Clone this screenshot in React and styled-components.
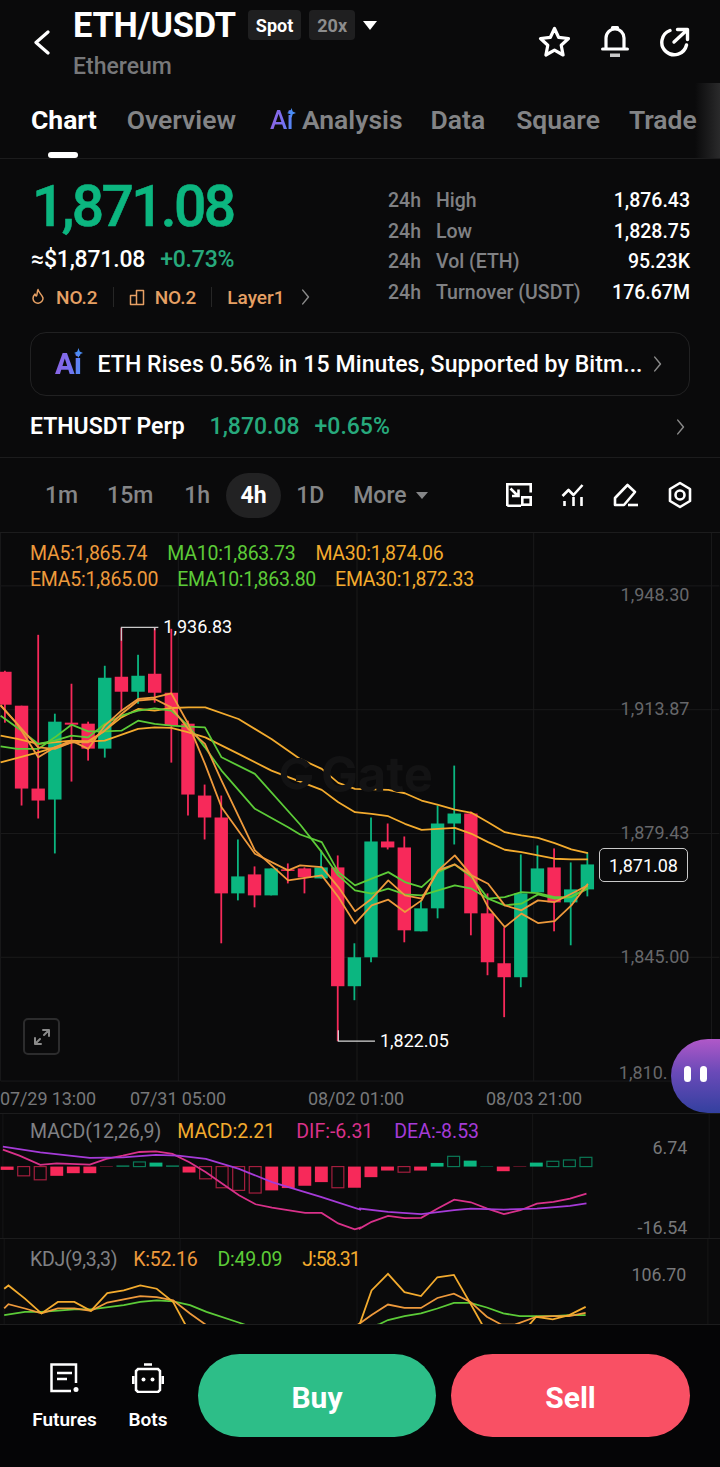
import React from 'react';
import styled, { createGlobalStyle } from 'styled-components';

const Global = createGlobalStyle`
  html, body { margin: 0; padding: 0; background: #0a0a0b; }
  body { font-family: Roboto, "Noto Sans", sans-serif; color: #fff; -webkit-font-smoothing: antialiased; }
  * { box-sizing: border-box; }
`;

const Page = styled.div`
  width: 720px; height: 1467px; position: relative; overflow: hidden; background: #0a0a0b;
  display: flex; flex-direction: column;
`;

/* ---------- header ---------- */
const Header = styled.header`
  height: 83px; display: grid; grid-template-columns: 73px 1fr auto; padding-left: 0; flex: none;
`;
const BackBtn = styled.div`
  display: flex; padding: 30px 0 0 33px;
`;
const TitleCol = styled.div`
  display: flex; flex-direction: column; padding-top: 6px;
`;
const TitleRow = styled.div` display: flex; align-items: center; height: 38px; `;
const Pair = styled.h1`
  margin: 0; font-size: 34.4px; line-height: 38px; font-weight: 700; letter-spacing: -0.2px; color: #fff;
`;
const Tag = styled.span`
  height: 30px; padding: 0 8px; display: inline-flex; align-items: center; justify-content: center;
  border-radius: 4px; background: #1f1f20; font-size: 18px; font-weight: 700;
  color: ${p => (p.$dim ? '#8d8d8d' : '#fff')}; margin-left: ${p => p.$gap}px;
`;
const Caret = styled.i`
  width: 0; height: 0; margin-left: ${p => p.$ml || 8}px; border-left: ${p => p.$w || 7}px solid transparent; border-right: ${p => p.$w || 7}px solid transparent;
  border-top: ${p => p.$h || 9}px solid ${p => p.$c || '#fff'};
`;
const Sub = styled.div`
  font-size: 23px; line-height: 26px; margin-top: 10px; font-weight: 500; color: #77787a;
`;
const HeadIcons = styled.div`
  display: flex; align-items: center; gap: 30px; padding: 23px 30px 0 0; height: 60px;
`;

/* ---------- tabs ---------- */
const Tabs = styled.nav`
  height: 76px; flex: none; position: relative; display: flex; align-items: flex-start; padding: 20px 0 0 31px;
  border-bottom: 1px solid #1c1c1d; white-space: nowrap; overflow: hidden;
`;
const Tab = styled.span`
  font-size: 26.5px; line-height: 34px; font-weight: ${p => (p.$on ? 700 : 600)}; color: ${p => (p.$on ? '#fff' : '#838486')};
  margin-left: ${p => p.$gap || 0}px; display: inline-flex; align-items: center;
`;
const AiMark = styled.span`
  position: relative; display: inline-block; font-weight: ${p => p.$w || 600}; font-size: ${p => p.$s}px; line-height: 1;
  background: linear-gradient(100deg, #8e62e0 0%, #7a6ff0 55%, #4a8df5 100%);
  -webkit-background-clip: text; background-clip: text; color: transparent;
  margin-right: ${p => p.$mr}px; letter-spacing: -0.5px;
`;
const Spark = styled.svg`
  position: absolute; right: ${p => p.$r}px; top: ${p => p.$t}px;
`;
const Indicator = styled.i`
  position: absolute; left: 48px; bottom: 0; width: 30px; height: 6px; border-radius: 3px; background: #fff;
`;
const TabFade = styled.i`
  position: absolute; right: 0; top: 0; bottom: 0; width: 25px; background: linear-gradient(90deg, rgba(40,40,40,0), #2a2a2b);
`;

/* ---------- quote ---------- */
const Quote = styled.section`
  height: 173px; flex: none; display: grid; grid-template-columns: 357px 1fr; padding: 0 30px 0 31px;
`;
const Left = styled.div` display: flex; flex-direction: column; `;
const BigPrice = styled.div`
  font-size: 57px; line-height: 60px; margin-top: 18px; margin-left: 1px; font-weight: 500; color: #0cb680; letter-spacing: -2.7px;
  -webkit-text-stroke: 0.6px #0cb680;
`;
const Approx = styled.div`
  display: flex; align-items: center; gap: 15px; font-size: 23px; line-height: 28px; margin-top: 9px; font-weight: 500; letter-spacing: -0.2px;
`;
const Green = styled.span`
  color: #27a97c; font-weight: 500; font-size: 23px;
`;
const Ranks = styled.div`
  display: flex; align-items: center; margin-top: 10px; height: 26px; color: #e6a064; font-size: 19px; font-weight: 500;
`;
const Rank = styled.span`
  display: inline-flex; align-items: center; gap: ${p => p.$g || 10}px;
`;
const VBar = styled.i` width: 1px; height: 20px; background: #262626; margin: 0 ${p => p.$m || 15}px; `;
const Stats = styled.div` display: flex; flex-direction: column; padding-top: 26px; `;
const StatRow = styled.div`
  display: grid; grid-template-columns: 48px 1fr auto; height: 30.7px; align-items: center; font-size: 19.5px; font-weight: 500; color: #808184;
`;
const StatVal = styled.span` color: #fff; font-weight: 500; `;

/* ---------- news + perp ---------- */
const News = styled.div`
  height: 64px; margin: 0 30px; flex: none; border: 1px solid #212122; border-radius: 16px; display: flex; align-items: center;
  padding: 0 26px 0 24px; font-size: 23px; font-weight: 500; white-space: nowrap;
`;
const NewsText = styled.span` flex: 1; letter-spacing: 0.1px; `;
const Perp = styled.div`
  height: 62px; flex: none; display: flex; align-items: center; padding: 0 34px 0 30px; border-bottom: 1px solid #1c1c1d; font-size: 23px;
`;
const PerpName = styled.span` font-weight: 600; margin-right: 25px; `;

/* ---------- time frames ---------- */
const Frames = styled.div`
  height: 75px; flex: none; display: flex; align-items: center; padding: 0 28px 0 45px; border-bottom: 1px solid #1c1c1d;
  font-size: 23px; font-weight: 500; color: #858688;
`;
const Frame = styled.span`
  margin-left: ${p => p.$gap || 0}px; ${p => p.$on && `
    width: 55px; height: 45px; border-radius: 23px; background: #222223; color: #fff; font-weight: 700;
    display: flex; align-items: center; justify-content: center;
  `}
`;
const FrameIcons = styled.div` margin-left: auto; display: flex; align-items: center; gap: 29px; `;

/* ---------- charts ---------- */
const Panel = styled.section`
  position: relative; flex: none; height: ${p => p.$h}px; overflow: ${p => (p.$clip ? 'hidden' : 'visible')};
  border-bottom: 1px solid #1c1c1d; padding: ${p => p.$pad};
`;
const ChartSvg = styled.svg`
  position: absolute; left: 0; top: 0; width: 720px; height: 100%; display: block;
`;
const Legend = styled.div`
  position: relative; display: flex; gap: ${p => p.$gap}px; font-size: 19.5px; line-height: 26px; letter-spacing: ${p => p.$ls ?? -0.25}px; white-space: nowrap;
`;
const Lg = styled.span`
  color: ${p => p.$c}; margin-right: ${p => p.$mr || 0}px; ${p => p.$ls !== undefined && `letter-spacing: ${p.$ls}px;`}
`;
const LastPrice = styled.div`
  position: absolute; left: 599px; top: 315px; width: 89px; height: 34px; border: 1px solid #c9c9c9; border-radius: 5px; background: #0a0a0b;
  display: flex; align-items: center; justify-content: center; font-size: 18px;
`;
const Expand = styled.div`
  position: absolute; left: 23px; top: 485px; width: 37px; height: 37px; border: 2px solid #2c2c2d; border-radius: 5px; display: flex; align-items: center; justify-content: center;
`;
const TimeAxis = styled.div`
  position: absolute; left: 0; top: 549px; height: 32px; width: 720px; display: flex; align-items: center; font-size: 18px; color: #77787a; letter-spacing: -0.1px; white-space: nowrap;
`;
const TimeLabel = styled.span` width: ${p => p.$w}px; flex: none; `;
const Blob = styled.div`
  position: absolute; left: 671px; top: 1039px; width: 90px; height: 74px; border-radius: 37px;
  background: linear-gradient(180deg, #b058c8 0%, #6a4ab8 45%, #33409f 100%); display: flex; gap: 9px; padding: 27px 0 0 13px;
`;
const Eye = styled.i` width: 7px; height: 16px; border-radius: 4px; background: #fff; `;
const Watermark = styled.div`
  position: absolute; left: 280px; top: 224px; display: flex; align-items: center; gap: 9px;
  font-family: Inter, Roboto, sans-serif; font-size: 49px; line-height: 36px; font-weight: 700; color: #131314;
`;

/* ---------- footer ---------- */
const Footer = styled.footer`
  flex: 1; background: #050506; display: flex; align-items: flex-start; padding: 29px 30px 0 32px;
`;
const FootItem = styled.div`
  width: ${p => p.$w}px; margin-right: ${p => p.$mr}px; flex: none; display: flex; flex-direction: column; align-items: center;
  font-size: 19px; line-height: 22px; font-weight: 600; padding-top: 9px; gap: 16px; white-space: nowrap;
`;
const FootIcon = styled.svg` display: block; `;
const Trade = styled.button`
  border: 0; height: 83px; width: ${p => p.$w}px; border-radius: 42px; margin-left: ${p => p.$gap}px; background: ${p => p.$c}; color: #fff;
  font: 700 30px Roboto, sans-serif; padding: 3px 0 0; flex: none;
`;

/* ---------- data ---------- */
const R = '#f7295a', G = '#0bb680';
const candles = [
  [670, 671, 704, 722, 'r'], [705, 705, 788, 805, 'r'], [634, 788, 800, 818, 'r'], [713, 721, 799, 853, 'g'],
  [683, 722, 724, 781, 'r'], [721, 723, 748, 760, 'r'], [665, 677, 748, 757, 'g'], [627, 676, 691, 710, 'r'],
  [654, 675, 691, 703, 'g'], [627, 673, 692, 702, 'r'], [628, 692, 725, 762, 'r'], [720, 723, 794, 815, 'r'],
  [784, 795, 817, 839, 'r'], [795, 817, 893, 943, 'r'], [839, 876, 893, 900, 'g'], [866, 874, 895, 907, 'r'],
  [868, 868, 895, 895, 'g'], [863, 869, 870, 883, 'r'], [867, 868, 877, 893, 'r'], [850, 867, 878, 878, 'g'],
  [855, 867, 986, 1041, 'r'], [943, 957, 986, 1000, 'g'], [817, 841, 957, 962, 'g'], [823, 841, 847, 849, 'r'],
  [836, 847, 930, 942, 'r'], [900, 908, 931, 931, 'g'], [805, 823, 908, 918, 'g'], [765, 813, 823, 844, 'g'],
  [811, 813, 913, 935, 'r'], [893, 913, 962, 975, 'r'], [927, 963, 977, 1017, 'r'], [854, 893, 977, 987, 'g'],
  [845, 868, 892, 892, 'g'], [848, 867, 902, 931, 'r'], [862, 889, 902, 945, 'g'], [852, 864, 889, 896, 'g'],
];
const cx = i => 4.3 + i * 16.67;

const z4 = (a) => a.map(([x, y]) => [x / 3, 600 + y / 3]);
const z5 = (a) => a.map(([x, y]) => [300 + x / 3, 750 + y / 3]);
const pts = (...groups) => groups.flat().map(([x, y]) => `${x.toFixed(1)},${y.toFixed(1)}`).join(' ');

const Y30 = '#f3ab2e', O5 = '#ee9a3c', G10 = '#5ccb38';
const maLines = [
  [Y30, pts(z4([[0,405],[50,415],[113,430],[213,420],[263,422],[313,390],[363,350],[413,325],[463,330],[513,322],[565,320],[615,320],[715,355],[814,415]]),
    z5([[0,25],[65,55],[115,97],[165,115],[265,118],[315,128],[365,150],[415,163],[465,177],[515,187],[565,215],[615,245],[665,255],[715,262],[765,278],[815,297],[865,308]]))],
  [Y30, pts(z4([[0,485],[113,455],[213,425],[313,420],[413,385],[463,380],[513,382],[565,395],[615,410],[715,460],[814,510]]),
    z5([[0,93],[65,118],[115,155],[165,185],[215,190],[265,197],[315,220],[365,238],[465,232],[515,250],[565,275],[615,298],[665,305],[715,315],[765,325],[815,327],[865,327]]))],
  [G10, pts(z4([[0,345],[63,390],[113,430],[163,420],[213,405],[263,410],[313,370],[363,345],[413,330],[463,323],[513,330],[564,375],[614,440],[664,510],[764,625],[864,680]]),
    z5([[0,252],[65,275],[115,365],[165,405],[215,385],[265,365],[315,395],[365,410],[415,365],[465,342],[515,380],[565,445],[615,465],[665,460],[715,432],[765,445],[815,440],[865,410]]))],
  [G10, pts(z4([[0,437],[50,445],[113,445],[163,410],[213,372],[263,392],[313,392],[363,390],[413,360],[463,370],[513,375],[564,378],[614,380],[664,470],[764,520]]),
    z5([[0,222],[65,305],[115,375],[165,420],[215,430],[265,415],[315,432],[365,435],[415,420],[465,405],[515,415],[565,445],[615,440],[665,425],[715,428],[765,440],[815,440],[865,415]]))],
  [O5, pts(z4([[0,313],[50,370],[113,470],[163,440],[213,420],[263,445],[313,375],[363,330],[413,295],[463,290],[513,278],[564,370],[614,490],[664,620],[764,760],[864,810]]),
    z5([[0,345],[65,350],[115,410],[165,483],[215,445],[265,390],[315,435],[365,445],[415,360],[465,342],[515,375],[565,400],[615,465],[665,480],[715,450],[765,455],[815,430],[865,405]]))],
  [O5, pts(z4([[0,315],[63,385],[113,440],[163,445],[213,425],[263,425],[313,390],[363,340],[413,300],[463,295],[513,320],[564,385],[614,430],[664,540],[764,750],[864,840]]),
    z5([[0,385],[65,375],[115,440],[165,520],[215,465],[265,448],[315,485],[365,450],[415,360],[465,315],[515,375],[565,470],[615,530],[665,490],[715,518],[765,512],[815,465],[865,400]]))],
];

const macdBars = [
  [198,208,1,'r'],[198,226,0,'r'],[198,238,0,'r'],[198,226,1,'r'],[198,218,1,'r'],[198,218,1,'r'],[198,199,1,'r'],[195,198,1,'g'],
  [184,198,0,'g'],[186,198,1,'g'],[195,198,1,'g'],[198,216,1,'r'],[198,235,0,'r'],[198,262,0,'r'],[198,270,0,'r'],[198,278,0,'r'],
  [198,270,1,'r'],[198,263,1,'r'],[198,256,1,'r'],[198,245,1,'r'],[198,262,0,'r'],[198,262,1,'r'],
  [198,230,1,'r'],[198,210,1,'r'],[198,215,0,'r'],[198,210,1,'r'],[187,198,1,'g'],[167,198,0,'g'],[180,198,1,'g'],[197,198,1,'g'],
  [198,212,1,'r'],[198,199,1,'r'],[186,198,1,'g'],[182,198,0,'g'],[178,198,0,'g'],[170,198,0,'g'],
];
const z6 = (a) => a.map(([x, y]) => [x / 3, 1100 + y / 3]);
const z7 = (a) => a.map(([x, y]) => [360 + x / 3, 1030 + y / 3]);
const dea = pts(z6([[0,138],[113,155],[263,172],[363,170],[463,163],[530,165],[614,175],[714,205],[814,245],[964,290],[1080,328]]),
  z7([[0,535],[85,545],[185,552],[285,540],[335,535],[435,538],[535,535],[635,527],[685,519]]));
const dif = pts(z6([[0,147],[50,165],[113,193],[163,188],[263,192],[313,175],[363,165],[413,154],[463,152],[513,160],[564,185],[614,215],[664,250],[714,285],[764,312],[814,322],[914,338],[964,338],[1014,370],[1064,388],[1080,383]]),
  z7([[0,595],[35,575],[85,557],[135,564],[185,563],[235,535],[285,508],[335,516],[385,535],[435,552],[485,540],[535,520],[585,515],[635,505],[685,490]]));
const kdjJ = pts(z6([[0,565],[13,555],[63,595],[113,640],[163,605],[213,605],[263,632],[313,578],[363,570],[413,555],[463,565],[513,605],[564,700],[700,760],[1000,760],[1060,700]]),
  z7([[0,880],[35,780],[85,730],[135,785],[185,797],[235,740],[285,733],[335,820],[380,900],[500,900],[535,860],[585,868],[635,855],[685,830]]));
const kdjK = pts(z6([[0,625],[13,612],[63,625],[113,640],[163,625],[213,625],[263,632],[313,607],[363,597],[413,587],[463,590],[513,600],[564,640],[620,680],[800,720],[1000,720]]),
  z7([[0,880],[35,855],[85,823],[135,833],[185,833],[235,803],[285,790],[335,815],[385,860],[430,884],[470,884],[535,860],[585,858],[635,858],[685,848]]));
const kdjD = pts(z6([[0,645],[63,635],[113,635],[213,628],[263,628],[363,615],[413,605],[463,600],[513,603],[564,615],[614,635],[714,668],[800,700],[1080,720]]),
  z7([[0,900],[60,882],[85,870],[135,858],[185,850],[235,835],[285,818],[335,818],[385,832],[435,850],[485,858],[535,858],[585,858],[635,855],[685,855]]));

const gridX = [0, 178, 357, 534, 712];

/* ---------- icons ---------- */
const Stroke = ({ w, h, vb, sw = 3, c = '#fff', children, fill = 'none' }) => (
  <svg width={w} height={h} viewBox={vb || `0 0 ${w} ${h}`} fill={fill} stroke={c} strokeWidth={sw} strokeLinecap="round" strokeLinejoin="round">{children}</svg>
);
const Square = ({ w, h, sw = 2.6, children }) => (
  <svg width={w} height={h} viewBox={`0 0 ${w} ${h}`} fill="none" stroke="#fff" strokeWidth={sw} strokeLinecap="butt" strokeLinejoin="miter">{children}</svg>
);
const Chevron = ({ h = 14, c = '#8a8a8a' }) => (
  <Stroke w={h * 0.7} h={h} vb="0 0 7 14" sw={1.3} c={c}><path d="M1 1l5 6-5 6" /></Stroke>
);

const AI = ({ s, mr, w, r, t }) => (
  <AiMark $s={s} $mr={mr} $w={w}>Ai
    <Spark $r={r} $t={t} width="9" height="10" viewBox="0 0 9 10"><path d="M4.5 0l1.2 3.6L9 5 5.700 6.300 4.500 10 3.300 6.300 0 5l3.300-1.400z" fill="#4a8df5" /></Spark>
  </AiMark>
);

export default function App() {
  return (
    <Page>
      <Global />
      <Header>
        <BackBtn>
          <Stroke w={17} h={25} sw={3.2}><path d="M15 2L3 12.500 15 23" /></Stroke>
        </BackBtn>
        <TitleCol>
          <TitleRow>
            <Pair>ETH/USDT</Pair>
            <Tag $gap={12}>Spot</Tag>
            <Tag $gap={8} $dim>20x</Tag>
            <Caret />
          </TitleRow>
          <Sub>Ethereum</Sub>
        </TitleCol>
        <HeadIcons>
          <Stroke w={33} h={32} sw={3.2}><path d="M16.500 2.500l4.100 8.800 9.900 1.200-7.300 6.700 1.900 9.800-8.600-4.900-8.600 4.900 1.900-9.800-7.300-6.700 9.900-1.200z" /></Stroke>
          <Stroke w={28} h={33} sw={3.2}>
            <path d="M5 24V13a9 9 0 0 1 18 0v11M1.600 24h24.800M11.500 2.500h5" />
            <rect x="9" y="28.500" width="10" height="3.500" fill="#c9c9c9" stroke="none" />
          </Stroke>
          <Stroke w={31} h={30} sw={3.4}><path d="M11 3.500A12.500 12.500 0 1 0 27.500 18" /><path d="M15 15L28 3M18.500 2.500h10v10" /></Stroke>
        </HeadIcons>
      </Header>

      <Tabs>
        <Tab $on>Chart</Tab>
        <Tab $gap={30}>Overview</Tab>
        <Tab $gap={34}><AI s={26} mr={9} w={500} r={-3} t={1} />Analysis</Tab>
        <Tab $gap={28}>Data</Tab>
        <Tab $gap={31}>Square</Tab>
        <Tab $gap={29}>Trade</Tab>
        <Indicator />
        <TabFade />
      </Tabs>

      <Quote>
        <Left>
          <BigPrice>1,871.08</BigPrice>
          <Approx>≈$1,871.08<Green>+0.73%</Green></Approx>
          <Ranks>
            <Rank $g={11}>
              <Stroke w={14} h={18} sw={1.5} c="#e6a064"><path d="M7 1.500c.5 3 4 5 5 8.500a5 5 0 0 1-10 .5c0-2 1-3.500 2-4.500.300 1.500 1 2 1.500 2C6.500 6 6 3.500 7 1.500z" /></Stroke>
              NO.2
            </Rank>
            <VBar $m={15} />
            <Rank>
              <Stroke w={16} h={18} sw={1.5} c="#e6a064"><path d="M1.500 7.500h6v9h-6zM7.500 2.500h7v14h-7z" /></Stroke>
              NO.2
            </Rank>
            <VBar $m={15} />
            <span>Layer1</span>
            <span style={{ width: 15 }} />
            <Chevron h={16} />
          </Ranks>
        </Left>
        <Stats>
          <StatRow><span>24h</span><span>High</span><StatVal>1,876.43</StatVal></StatRow>
          <StatRow><span>24h</span><span>Low</span><StatVal>1,828.75</StatVal></StatRow>
          <StatRow><span>24h</span><span>Vol (ETH)</span><StatVal>95.23K</StatVal></StatRow>
          <StatRow><span>24h</span><span>Turnover (USDT)</span><StatVal>176.67M</StatVal></StatRow>
        </Stats>
      </Quote>

      <News>
        <AI s={29} mr={16} w={800} r={-2} t={-2} />
        <NewsText>ETH Rises 0.56% in 15 Minutes, Supported by Bitm...</NewsText>
        <Chevron h={16} />
      </News>
      <Perp>
        <PerpName>ETHUSDT Perp</PerpName>
        <Green>1,870.08</Green>
        <span style={{ width: 15 }} />
        <Green>+0.65%</Green>
        <span style={{ flex: 1 }} />
        <Chevron h={16} />
      </Perp>

      <Frames>
        <Frame>1m</Frame>
        <Frame $gap={29}>15m</Frame>
        <Frame $gap={31}>1h</Frame>
        <Frame $gap={16} $on>4h</Frame>
        <Frame $gap={15}>1D</Frame>
        <Frame $gap={29}>More</Frame>
        <Caret $c="#858688" $w={6} $h={7} $ml={9} />
        <FrameIcons>
          <Square w={26} h={24}>
            <path d="M1.300 23V1.300h23.400V9.500M1.300 22.700H15" />
            <rect x="16.300" y="14.300" width="8.400" height="7.400" />
            <path d="M4.500 5.500l7 7M6 13h6.500V6.500" />
          </Square>
          <Stroke w={23} h={24} sw={2.6}>
            <path d="M1.500 13L7.500 7l5 5L21.500 2" strokeLinecap="butt" />
            <path d="M3.500 23v-5M12.500 23v-9M20.500 23v-9" strokeLinecap="butt" />
          </Stroke>
          <Stroke w={26} h={24} sw={2.6}><path d="M2 15L14.500 2l7.500 7L11 22H2z" /><path d="M15 22h10" strokeLinecap="butt" /></Stroke>
          <Stroke w={24} h={28} sw={2.6}><path d="M12 2l10 6v12l-10 6L2 20V8z" /><circle cx="12" cy="14" r="4.500" /></Stroke>
        </FrameIcons>
      </Frames>

      <Panel $h={581} $pad="8px 0 0 30px">
        <ChartSvg viewBox="0 532 720 581" aria-hidden="true">
          {gridX.map(x => <line key={x} x1={x} x2={x} y1="532" y2="1081" stroke="#1a1a1b" strokeWidth="1" />)}
          {[585, 709, 833, 957, 1081].map(y => <line key={y} x1="0" x2="720" y1={y} y2={y} stroke="#1a1a1b" strokeWidth="1" />)}
          {candles.map(([hi, top, bot, lo, k], i) => (
            <g key={i} fill={k === 'r' ? R : G} stroke="none">
              <rect x={cx(i) - 0.9} y={hi} width="1.800" height={lo - hi} />
              <rect x={cx(i) - 6.700} y={top} width="13.400" height={Math.max(bot - top, 1.5)} />
            </g>
          ))}
          {maLines.map(([c, p], i) => <polyline key={i} points={p} fill="none" stroke={c} strokeWidth="1.800" strokeLinejoin="round" />)}
          <path d="M121 640V626.500H158" fill="none" stroke="#c9c9c9" strokeWidth="1.200" />
          <path d="M154.300 626.500v3" fill="none" stroke="#c9c9c9" strokeWidth="1.200" />
          <text x="163" y="632.500" fontSize="18" fill="#fff" fontFamily="Roboto">1,936.83</text>
          <path d="M338.300 1030v11H375" fill="none" stroke="#d8d8d8" strokeWidth="1.200" />
          <text x="380" y="1047" fontSize="18" fill="#fff" fontFamily="Roboto">1,822.05</text>
          {[['1,948.30', 600], ['1,913.87', 714], ['1,879.43', 838.500], ['1,845.00', 962.500], ['1,810.', 1078.500]].map(([t, y]) => (
            <text key={t} x={t === '1,810.' ? 668 : 690} y={y} textAnchor="end" fontSize="18" fill="#66676a" fontFamily="Roboto">{t}</text>
          ))}
        </ChartSvg>
        <Legend $gap={20}><Lg $c="#ee9a3c">MA5:1,865.74</Lg><Lg $c="#5ccb38">MA10:1,863.73</Lg><Lg $c="#f3ab2e">MA30:1,874.06</Lg></Legend>
        <Legend $gap={19}><Lg $c="#ee9a3c">EMA5:1,865.00</Lg><Lg $c="#5ccb38">EMA10:1,863.80</Lg><Lg $c="#f3ab2e">EMA30:1,872.33</Lg></Legend>
        <Watermark>
          <svg width="32" height="34" viewBox="0 0 32 34" aria-hidden="true"><path d="M28 9A13 13 0 1 0 29 20H16" fill="none" stroke="#131314" strokeWidth="6" /></svg>
          Gate
        </Watermark>
        <LastPrice>1,871.08</LastPrice>
        <Expand>
          <Stroke w={18} h={18} sw={2} c="#8a8a8a"><path d="M2 10v6h6M16 8V2h-6M2 16l5-5M16 2l-5 5" /></Stroke>
        </Expand>
        <TimeAxis>
          <TimeLabel $w={130}>07/29 13:00</TimeLabel>
          <TimeLabel $w={178}>07/31 05:00</TimeLabel>
          <TimeLabel $w={178}>08/02 01:00</TimeLabel>
          <TimeLabel $w={120}>08/03 21:00</TimeLabel>
        </TimeAxis>
      </Panel>

      <Panel $h={125} $pad="5px 0 0 30px">
        <ChartSvg viewBox="0 1113 720 125" aria-hidden="true">
          {gridX.map(x => <line key={x} x1={x} x2={x} y1="1113" y2="1238" stroke="#161617" strokeWidth="1" />)}
          {macdBars.map(([a, b, f, k], i) => {
            const c = k === 'r' ? R : G;
            return f
              ? <rect key={i} x={cx(i) - 6.500} y={1100 + a / 3} width="13" height={(b - a) / 3} fill={c} />
              : <rect key={i} x={cx(i) - 6} y={1100 + a / 3} width="12" height={(b - a) / 3} fill="none" stroke={c} strokeOpacity=".65" strokeWidth="1.200" />;
          })}
          <polyline points={dif} fill="none" stroke="#d9318a" strokeWidth="1.800" />
          <polyline points={dea} fill="none" stroke="#a53bd8" strokeWidth="1.800" />
          <text x="690" y="1153" textAnchor="end" fontSize="18" fill="#77787a" fontFamily="Roboto">6.74</text>
          <text x="690" y="1234" textAnchor="end" fontSize="18" fill="#77787a" fontFamily="Roboto">-16.54</text>
        </ChartSvg>
        <Legend $gap={21} $ls={0}><Lg $c="#808184" $mr={-5}>MACD(12,26,9)</Lg><Lg $c="#f3ab2e">MACD:2.21</Lg><Lg $c="#d9318a">DIF:-6.31</Lg><Lg $c="#a53bd8">DEA:-8.53</Lg></Legend>
      </Panel>

      <Panel $h={86} $clip $pad="8px 0 0 30px">
        <ChartSvg viewBox="0 1238 720 86" aria-hidden="true">
          {gridX.map(x => <line key={x} x1={x} x2={x} y1="1238" y2="1324" stroke="#161617" strokeWidth="1" />)}
          <polyline points={kdjD} fill="none" stroke={G10} strokeWidth="1.800" />
          <polyline points={kdjK} fill="none" stroke={O5} strokeWidth="1.800" />
          <polyline points={kdjJ} fill="none" stroke={Y30} strokeWidth="1.800" />
          <text x="690" y="1281" textAnchor="end" fontSize="18" fill="#77787a" fontFamily="Roboto">106.70</text>
        </ChartSvg>
        <Legend $gap={20}><Lg $c="#808184" $mr={-4}>KDJ(9,3,3)</Lg><Lg $c="#ee9a3c">K:52.16</Lg><Lg $c="#5ccb38">D:49.09</Lg><Lg $c="#f3ab2e" $ls={-1}>J:58.31</Lg></Legend>
      </Panel>

      <Footer>
        <FootItem $w={65} $mr={32}>
          <FootIcon as="svg" width="30" height="30" viewBox="0 0 30 30" fill="none" stroke="#fff" strokeWidth="2.500">
            <path d="M26 20V1.500H1.500V28H21" />
            <path d="M7 10h15M7 16h10" />
            <circle cx="26" cy="26.500" r="2.500" fill="#fff" stroke="none" />
          </FootIcon>
          <span>Futures</span>
        </FootItem>
        <FootItem $w={38} $mr={31}>
          <FootIcon as="svg" width="32" height="30" viewBox="0 0 32 30" fill="none" stroke="#fff" strokeWidth="2.500">
            <path d="M12 1.500h8M6 6h20l2 2v19l-2 2H6l-2-2V8zM1.200 13v8M30.800 13v8" />
            <circle cx="11.500" cy="16.500" r="2" fill="#fff" stroke="none" />
            <circle cx="20.500" cy="16.500" r="2" fill="#fff" stroke="none" />
          </FootIcon>
          <span>Bots</span>
        </FootItem>
        <Trade $w={238} $gap={0} $c="#2dbe88">Buy</Trade>
        <Trade $w={239} $gap={15} $c="#f95064">Sell</Trade>
      </Footer>

      <Blob><Eye /><Eye /></Blob>
    </Page>
  );
}
